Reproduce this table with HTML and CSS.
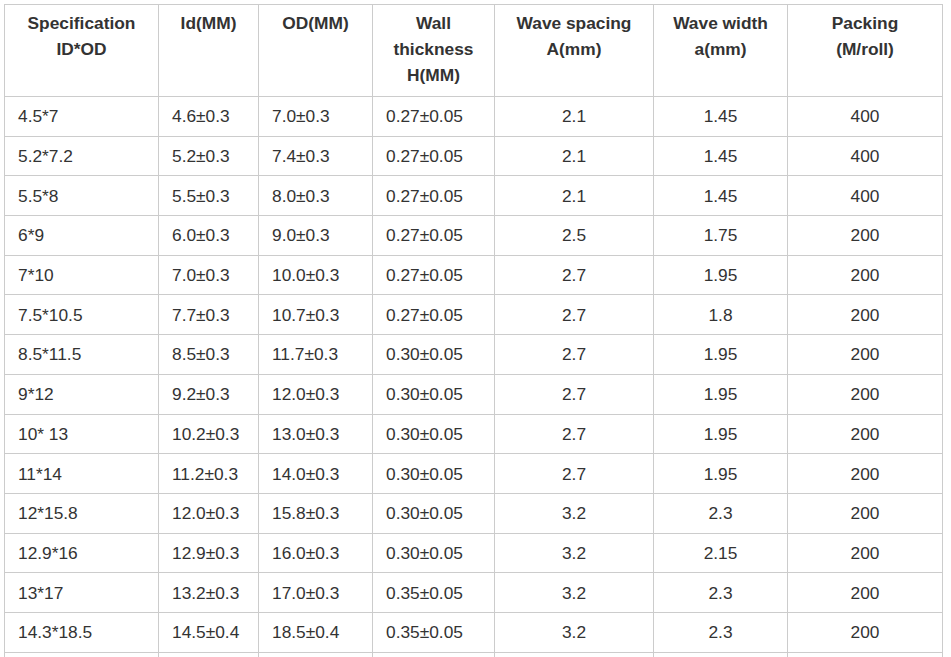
FILE: index.html
```html
<!DOCTYPE html>
<html>
<head>
<meta charset="utf-8">
<link rel="stylesheet" href="styles.css">
</head>
<body>
<table class="spec">
<colgroup>
<col class="c1"><col class="c2"><col class="c3"><col class="c4"><col class="c5"><col class="c6"><col class="c7">
</colgroup>
<thead>
<tr><th>Specification<br>ID*OD</th><th>Id(MM)</th><th>OD(MM)</th><th>Wall<br>thickness<br>H(MM)</th><th>Wave spacing<br>A(mm)</th><th>Wave width<br>a(mm)</th><th>Packing<br>(M/roll)</th></tr>
</thead>
<tbody>
<tr><td>4.5*7</td><td>4.6±0.3</td><td>7.0±0.3</td><td>0.27±0.05</td><td class="ctr">2.1</td><td class="ctr">1.45</td><td class="ctr">400</td></tr>
<tr><td>5.2*7.2</td><td>5.2±0.3</td><td>7.4±0.3</td><td>0.27±0.05</td><td class="ctr">2.1</td><td class="ctr">1.45</td><td class="ctr">400</td></tr>
<tr><td>5.5*8</td><td>5.5±0.3</td><td>8.0±0.3</td><td>0.27±0.05</td><td class="ctr">2.1</td><td class="ctr">1.45</td><td class="ctr">400</td></tr>
<tr><td>6*9</td><td>6.0±0.3</td><td>9.0±0.3</td><td>0.27±0.05</td><td class="ctr">2.5</td><td class="ctr">1.75</td><td class="ctr">200</td></tr>
<tr><td>7*10</td><td>7.0±0.3</td><td>10.0±0.3</td><td>0.27±0.05</td><td class="ctr">2.7</td><td class="ctr">1.95</td><td class="ctr">200</td></tr>
<tr><td>7.5*10.5</td><td>7.7±0.3</td><td>10.7±0.3</td><td>0.27±0.05</td><td class="ctr">2.7</td><td class="ctr">1.8</td><td class="ctr">200</td></tr>
<tr><td>8.5*11.5</td><td>8.5±0.3</td><td>11.7±0.3</td><td>0.30±0.05</td><td class="ctr">2.7</td><td class="ctr">1.95</td><td class="ctr">200</td></tr>
<tr><td>9*12</td><td>9.2±0.3</td><td>12.0±0.3</td><td>0.30±0.05</td><td class="ctr">2.7</td><td class="ctr">1.95</td><td class="ctr">200</td></tr>
<tr><td>10* 13</td><td>10.2±0.3</td><td>13.0±0.3</td><td>0.30±0.05</td><td class="ctr">2.7</td><td class="ctr">1.95</td><td class="ctr">200</td></tr>
<tr><td>11*14</td><td>11.2±0.3</td><td>14.0±0.3</td><td>0.30±0.05</td><td class="ctr">2.7</td><td class="ctr">1.95</td><td class="ctr">200</td></tr>
<tr><td>12*15.8</td><td>12.0±0.3</td><td>15.8±0.3</td><td>0.30±0.05</td><td class="ctr">3.2</td><td class="ctr">2.3</td><td class="ctr">200</td></tr>
<tr><td>12.9*16</td><td>12.9±0.3</td><td>16.0±0.3</td><td>0.30±0.05</td><td class="ctr">3.2</td><td class="ctr">2.15</td><td class="ctr">200</td></tr>
<tr><td>13*17</td><td>13.2±0.3</td><td>17.0±0.3</td><td>0.35±0.05</td><td class="ctr">3.2</td><td class="ctr">2.3</td><td class="ctr">200</td></tr>
<tr><td>14.3*18.5</td><td>14.5±0.4</td><td>18.5±0.4</td><td>0.35±0.05</td><td class="ctr">3.2</td><td class="ctr">2.3</td><td class="ctr">200</td></tr>
<tr><td>&nbsp;</td><td>&nbsp;</td><td>&nbsp;</td><td>&nbsp;</td><td class="ctr">&nbsp;</td><td class="ctr">&nbsp;</td><td class="ctr">&nbsp;</td></tr>
</tbody>
</table>
</body>
</html>
```
FILE: styles.css
```css
html, body {
  margin: 0;
  padding: 0;
  background: #fff;
}
body {
  padding: 4px;
  font-family: "Liberation Sans", Arial, sans-serif;
  font-size: 13pt;
  line-height: 26px;
  color: #333;
}
.spec {
  border-collapse: collapse;
  table-layout: fixed;
  width: 938px;
}
.c1 { width: 154px; }
.c2 { width: 100px; }
.c3 { width: 114px; }
.c4 { width: 122px; }
.c5 { width: 159px; }
.c6 { width: 134px; }
.c7 { width: 155px; }
.spec th,
.spec td {
  border: 1px solid #ccc;
  padding: 6.35px 13px;
}
.spec th {
  font-weight: bold;
  text-align: center;
  vertical-align: top;
  padding-top: 4.5px;
  padding-bottom: 8.5px;
}
.spec td {
  text-align: left;
  vertical-align: middle;
}
.spec td.ctr {
  text-align: center;
}
```
